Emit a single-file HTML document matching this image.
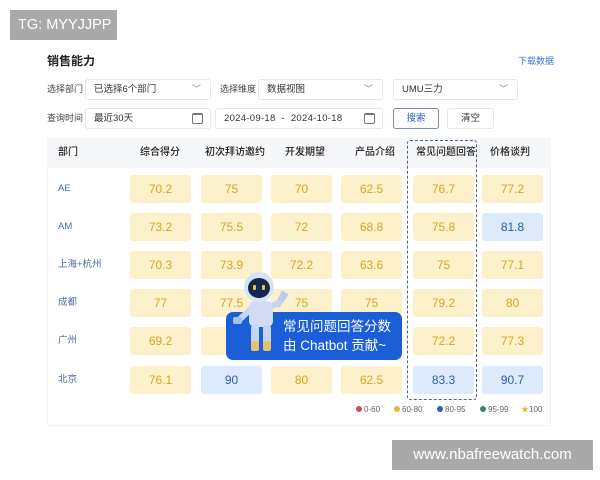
<!DOCTYPE html>
<html><head><meta charset="utf-8"><style>
*{margin:0;padding:0;box-sizing:border-box}
body{width:600px;height:480px;background:#fff;position:relative;overflow:hidden;font-family:"Liberation Sans","Noto Sans CJK SC",sans-serif;color:#333;line-height:1}
.a{position:absolute;line-height:1}
.lbl{font-size:9px;color:#444}
.inp{position:absolute;border:1px solid #e6e6e6;border-radius:3px;height:21px;font-size:9.5px;color:#333;padding-left:8px;line-height:19px;background:#fff;white-space:nowrap}
.chev{position:absolute;right:9px;top:0px;color:#888;font-size:9px}
.cal{position:absolute;right:7px;top:4px;width:11px;height:11px;border:1.3px solid #777;border-radius:2px;border-top-width:2.5px}
.cell{position:absolute;width:61px;height:28px;border-radius:3px;font-size:12px;text-align:center;line-height:28px}
.y{background:#fdf1cc;color:#d7a51e}
.b{background:#dceafb;color:#2d5fa6}
.hd{position:absolute;top:148px;font-size:10px;color:#222;line-height:1;font-weight:500}
.rn{position:absolute;left:58px;font-size:9.5px;color:#4a6a9a;line-height:1}
.lg{position:absolute;top:406px;font-size:8px;color:#666}
.dot{display:inline-block;width:6px;height:6px;border-radius:50%;margin-right:2px}
</style></head><body>
<div class="a" style="left:10px;top:10px;width:107px;height:30px;background:#a9a9a9;color:#fff;font-size:14.5px;line-height:30px;padding-left:8px;white-space:nowrap;overflow:hidden">TG: MYYJJPP</div>
<div class="a" style="left:47px;top:55px;font-size:12px;font-weight:bold;color:#222">销售能力</div>
<div class="a" style="left:518px;top:57px;font-size:9px;color:#3a78d8">下载数据</div>

<div class="a lbl" style="left:47px;top:85px">选择部门</div>
<div class="inp" style="left:85px;top:79px;width:126px">已选择6个部门<span class="chev">﹀</span></div>
<div class="a lbl" style="left:220px;top:85px">选择维度</div>
<div class="inp" style="left:258px;top:79px;width:125px">数据视图<span class="chev">﹀</span></div>
<div class="inp" style="left:393px;top:79px;width:125px">UMU三力<span class="chev">﹀</span></div>

<div class="a lbl" style="left:47px;top:114px">查询时间</div>
<div class="inp" style="left:85px;top:108px;width:126px">最近30天<span class="cal"></span></div>
<div class="inp" style="left:215px;top:108px;width:168px;letter-spacing:.3px">2024-09-18 &nbsp;- &nbsp;2024-10-18<span class="cal"></span></div>
<div class="inp" style="left:393px;top:108px;width:46px;border-color:#7d8ea8;color:#2f63c0;padding:0;text-align:center">搜索</div>
<div class="inp" style="left:447px;top:108px;width:47px;padding:0;text-align:center">清空</div>

<div class="a" style="left:47px;top:138px;width:504px;height:288px;border:1px solid #f0f0f0;border-radius:3px"></div>
<div class="a" style="left:47px;top:138px;width:504px;height:30px;background:#f6f7f9"></div>
<div class="hd" style="left:58px">部门</div>
<div class="hd" style="left:140px">综合得分</div>
<div class="hd" style="left:205px">初次拜访邀约</div>
<div class="hd" style="left:285px">开发期望</div>
<div class="hd" style="left:355px">产品介绍</div>
<div class="hd" style="left:416px">常见问题回答</div>
<div class="hd" style="left:490px">价格谈判</div>

<div class="rn" style="top:184px">AE</div>
<div class="rn" style="top:222px">AM</div>
<div class="rn" style="top:260px">上海+杭州</div>
<div class="rn" style="top:298px">成都</div>
<div class="rn" style="top:336px">广州</div>
<div class="rn" style="top:375px">北京</div>

<div class="cell y" style="left:130px;top:175px">70.2</div><div class="cell y" style="left:201px;top:175px">75</div><div class="cell y" style="left:271px;top:175px">70</div><div class="cell y" style="left:341px;top:175px">62.5</div><div class="cell y" style="left:413px;top:175px">76.7</div><div class="cell y" style="left:482px;top:175px">77.2</div>
<div class="cell y" style="left:130px;top:213px">73.2</div><div class="cell y" style="left:201px;top:213px">75.5</div><div class="cell y" style="left:271px;top:213px">72</div><div class="cell y" style="left:341px;top:213px">68.8</div><div class="cell y" style="left:413px;top:213px">75.8</div><div class="cell b" style="left:482px;top:213px">81.8</div>
<div class="cell y" style="left:130px;top:251px">70.3</div><div class="cell y" style="left:201px;top:251px">73.9</div><div class="cell y" style="left:271px;top:251px">72.2</div><div class="cell y" style="left:341px;top:251px">63.6</div><div class="cell y" style="left:413px;top:251px">75</div><div class="cell y" style="left:482px;top:251px">77.1</div>
<div class="cell y" style="left:130px;top:289px">77</div><div class="cell y" style="left:201px;top:289px">77.5</div><div class="cell y" style="left:271px;top:289px">75</div><div class="cell y" style="left:341px;top:289px">75</div><div class="cell y" style="left:413px;top:289px">79.2</div><div class="cell y" style="left:482px;top:289px">80</div>
<div class="cell y" style="left:130px;top:327px">69.2</div><div class="cell y" style="left:201px;top:327px">7</div><div class="cell y" style="left:271px;top:327px"></div><div class="cell y" style="left:341px;top:327px"></div><div class="cell y" style="left:413px;top:327px">72.2</div><div class="cell y" style="left:482px;top:327px">77.3</div>
<div class="cell y" style="left:130px;top:366px">76.1</div><div class="cell b" style="left:201px;top:366px">90</div><div class="cell y" style="left:271px;top:366px">80</div><div class="cell y" style="left:341px;top:366px">62.5</div><div class="cell b" style="left:413px;top:366px">83.3</div><div class="cell b" style="left:482px;top:366px">90.7</div>

<div class="a" style="left:407px;top:140px;width:70px;height:260px;border:1.5px dashed #4f6680;border-radius:3px"></div>

<div class="lg" style="left:356px"><span class="dot" style="background:#c9504f"></span>0-60</div>
<div class="lg" style="left:394px"><span class="dot" style="background:#e8b43a"></span>60-80</div>
<div class="lg" style="left:437px"><span class="dot" style="background:#2f5fb8"></span>80-95</div>
<div class="lg" style="left:480px"><span class="dot" style="background:#2e8a66"></span>95-99</div>
<div class="lg" style="left:521px"><span style="color:#e8b43a">★</span>100</div>

<div class="a" style="left:226px;top:312px;width:176px;height:48px;background:#1a5ed8;border-radius:7px"></div>
<div class="a" style="left:283px;top:317px;font-size:13.5px;color:#fff;line-height:19px;white-space:nowrap">常见问题回答分数<br>由 Chatbot 贡献~</div>
<svg class="a" style="left:225px;top:265px" width="70" height="95" viewBox="0 0 70 95">
<path d="M52 40 L58 28 M54 40 L61 30" stroke="#b8cdee" stroke-width="4" stroke-linecap="round"/>
<path d="M28 42 L14 55" stroke="#c6d6f0" stroke-width="6" stroke-linecap="round"/>
<rect x="8" y="52" width="9" height="7" rx="2" fill="#a8bee6"/>
<path d="M44 42 L54 38" stroke="#c6d6f0" stroke-width="6" stroke-linecap="round"/>
<rect x="24" y="36" width="24" height="26" rx="6" fill="#cfdcf3"/>
<rect x="26" y="60" width="8" height="24" rx="3" fill="#c6d6f0"/>
<rect x="38" y="60" width="8" height="24" rx="3" fill="#c6d6f0"/>
<rect x="26" y="76" width="8" height="10" rx="2" fill="#e8c070"/>
<rect x="38" y="76" width="8" height="10" rx="2" fill="#e8c070"/>
<circle cx="34" cy="22" r="15" fill="#d8e3f6"/>
<ellipse cx="34" cy="23" rx="11" ry="10" fill="#152650"/>
<rect x="28" y="20" width="3" height="5" rx="1" fill="#f1c24a"/>
<rect x="37" y="20" width="3" height="5" rx="1" fill="#f1c24a"/>
</svg>

<div class="a" style="left:392px;top:440px;width:201px;height:30px;background:#a9a9a9;color:#fff;font-size:15px;line-height:30px;text-align:center">www.nbafreewatch.com</div>
</body></html>
